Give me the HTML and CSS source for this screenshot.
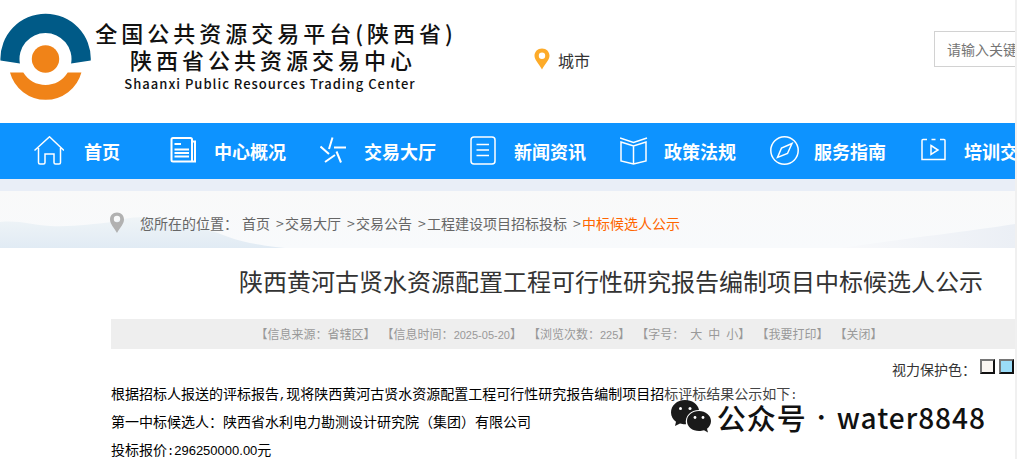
FILE: index.html
```html
<!DOCTYPE html>
<html lang="zh-CN">
<head>
<meta charset="utf-8">
<title>陕西省公共资源交易中心</title>
<link rel="stylesheet" href="styles.css">
</head>
<body>
<div class="page">
  <header class="header">
    <svg class="logo" width="92" height="88" viewBox="0 0 92 88" aria-hidden="true">
      <path fill="#005a87" d="M0.430 47.500A45.200 45.200 0 1 1 90.770 47.500L71.100 50.500A26 26 0 1 0 19.900 50.500Z"/>
      <path fill="#f08318" d="M10 59.500H23.300A26 26 0 0 0 67.700 59.500H81.400A37 37 0 0 1 10 59.500Z"/>
      <circle cx="45.500" cy="46" r="13.700" fill="#f08318"/>
    </svg>
    <div class="brand">
      <div class="brand-cn">全国公共资源交易平台(陕西省)</div>
      <div class="brand-cn brand-second">陕西省公共资源交易中心</div>
      <div class="brand-en">Shaanxi Public Resources Trading Center</div>
    </div>
    <a class="city" href="#">
      <svg width="16" height="22" viewBox="0 0 16 22" aria-hidden="true"><path fill="#fdab29" fill-rule="evenodd" d="M8 0.500C3.600 0.500 0.500 3.700 0.500 7.700C0.500 12 4.500 15 8 21.500C11.500 15 15.500 12 15.500 7.700C15.500 3.700 12.400 0.500 8 0.500ZM8 4.500A3.200 3.200 0 1 1 8 10.900A3.200 3.200 0 1 1 8 4.500Z"/></svg>
      <span>城市</span>
    </a>
    <form class="search"><input type="text" aria-label="搜索" placeholder="请输入关键字"></form>
  </header>

  <nav class="nav">
    <a class="nav-item nav-home" href="#">
      <svg class="nav-icon" viewBox="0 0 30 30"><path d="M0.500 14.500L15.500 0.800L30 14.500M4.500 12V26.500Q4.500 28 6 28H9.500Q11 28 11 26.500V18H20V26.500Q20 28 21.500 28H25Q26.500 28 26.500 26.500V12"/></svg>
      <span>首页</span>
    </a>
    <a class="nav-item" href="#">
      <svg class="nav-icon nav-icon-bold" viewBox="0 0 30 30"><path d="M3 2H20.500Q22 2 22 3.500V25.500H3Q1.500 25.500 1.500 24V3.500Q1.500 2 3 2ZM22 5.500H25V25.500H20.500M4.500 8H11M4.500 13.500H19M4.500 17H19M4.500 20.500H19"/></svg>
      <span>中心概况</span>
    </a>
    <a class="nav-item" href="#">
      <svg class="nav-icon nav-icon-bold" viewBox="0 0 30 30"><path d="M12.500 1.500L9 13M14 11.500H26M16.500 15.500L21 26.500M15 19L5 26M9 18L0.500 10.500"/></svg>
      <span>交易大厅</span>
    </a>
    <a class="nav-item" href="#">
      <svg class="nav-icon" viewBox="0 0 30 30"><rect x="1" y="1" width="24" height="27" rx="3"/><path d="M6.500 8.500H19M6.500 14H19M6.500 19.500H19"/></svg>
      <span>新闻资讯</span>
    </a>
    <a class="nav-item" href="#">
      <svg class="nav-icon" viewBox="0 0 30 30"><path d="M0 2L13.500 6.500L27 2M1 6L13.500 10L26 6V25L13.500 28L1 25ZM13.500 10V28"/></svg>
      <span>政策法规</span>
    </a>
    <a class="nav-item" href="#">
      <svg class="nav-icon" viewBox="0 0 30 30"><circle cx="14.500" cy="14.500" r="13.700"/><path d="M22 7.500L11.500 12L7.500 21.500L17.500 17.500Z"/></svg>
      <span>服务指南</span>
    </a>
    <a class="nav-item" href="#">
      <svg class="nav-icon" viewBox="0 0 30 30"><path d="M7 3.500H3Q2 3.500 2 4.500V23.500H25V4.500Q25 3.500 24 3.500H20M11.500 3.500H15.500M11 9.500L18 14L11 18.500Z"/></svg>
      <span>培训交易</span>
    </a>
  </nav>

  <div class="crumb-bar">
    <svg class="hills" viewBox="0 0 1015 57" preserveAspectRatio="none" aria-hidden="true">
      <defs>
        <linearGradient id="hill" x1="0" y1="0" x2="0" y2="1"><stop offset="0" stop-color="#eff4f7"/><stop offset="1" stop-color="#e1ebf4"/></linearGradient>
        <linearGradient id="slope" x1="0" y1="0" x2="1" y2="0"><stop offset="0" stop-color="#f8f9fb"/><stop offset="1" stop-color="#ebeff5"/></linearGradient>
      </defs>
      <path fill="url(#hill)" d="M0 31C20 29 32 34 50 35C75 36 92 33 112 31C130 25 145 25 165 29C187 34 202 37 218 42C235 49 248 53 285 57H0Z"/>
      <path fill="url(#slope)" d="M840 57C910 47 970 40 1015 33V57Z"/>
    </svg>
    <div class="crumbs">
      <svg class="crumb-pin" width="16" height="22" viewBox="0 0 16 22" aria-hidden="true"><path fill="#b1b1b1" fill-rule="evenodd" d="M8 0.500C3.800 0.500 1 3.500 1 7.500C1 12 5 15.500 8 21C11 15.500 15 12 15 7.500C15 3.500 12.200 0.500 8 0.500ZM8 3.800A3.200 3.200 0 1 1 8 10.200A3.200 3.200 0 1 1 8 3.800Z"/></svg>
      <span class="crumb-label">您所在的位置：</span>
      <a href="#">首页</a><span class="sep">&gt;</span><a href="#">交易大厅</a><span class="sep">&gt;</span><a href="#">交易公告</a><span class="sep">&gt;</span><a href="#">工程建设项目招标投标</a><span class="sep">&gt;</span><a class="current" href="#">中标候选人公示</a>
    </div>
  </div>

  <main class="article">
    <h1 class="title">陕西黄河古贤水资源配置工程可行性研究报告编制项目中标候选人公示</h1>
    <div class="meta">
      <span>【信息来源：省辖区】</span>
      <span>【信息时间：<span class="num">2025-05-20</span>】</span>
      <span>【浏览次数：<span class="num">225</span>】</span>
      <span class="sizes"><span>【字号：</span><a href="#">大</a><a href="#">中</a><a href="#">小】</a></span>
      <a href="#">【我要打印】</a>
      <a href="#">【关闭】</a>
    </div>
    <div class="eye-care">
      <span class="eye-label">视力保护色：</span>
      <button class="swatch swatch-cream" type="button" aria-label="米白"></button>
      <button class="swatch swatch-blue" type="button" aria-label="浅蓝"></button>
    </div>
    <div class="content">
      <p>根据招标人报送的评标报告<span class="punct">,</span>现将陕西黄河古贤水资源配置工程可行性研究报告编制项目招<span class="soft">标评标结果公示如下<span class="punct">:</span></span></p>
      <p>第一中标候选人：陕西省水利电力勘测设计研究院（集团）有限公司</p>
      <p>投标报价<span class="punct">:</span><span class="num">296250000.00</span>元</p>
    </div>
    <div class="watermark">
      <svg width="42" height="36" viewBox="0 0 42 36" aria-hidden="true">
        <path fill="#1a1a1a" d="M15 1C7 1 1 6.500 1 13.500C1 17.500 3 20.500 6 22.800L5 27L10 24.500C12 25 13.500 25.300 16 25.200C14.500 17 21 11 29 11C28 5 22 1 15 1Z"/>
        <path fill="#1a1a1a" d="M29 12C22 12 17 16.500 17 22C17 28 22.500 32 29 32C31 32 32.500 31.700 34 31.200L38 33.500L37 29.800C39.500 28 41 25 41 22C41 16.500 35.500 12 29 12Z"/>
        <g fill="#fff"><circle cx="10.500" cy="9.500" r="1.500"/><circle cx="20" cy="9.500" r="1.500"/><circle cx="25" cy="18.500" r="1.400"/><circle cx="33" cy="18.500" r="1.400"/></g>
      </svg>
      <span class="wm-label">公众号</span><span class="wm-dot">·</span><span>water8848</span>
    </div>
  </main>
</div>
</body>
</html>
```
FILE: styles.css
```css
* { box-sizing: border-box; }

body {
  margin: 0;
  background: #f0f0f0;
  font-family: "Noto Sans CJK SC", sans-serif;
  font-size: 14px;
  color: #333;
}

a { color: inherit; text-decoration: none; }
svg { display: block; flex: none; }

.page {
  min-height: 100vh;
  margin-right: 2px;
  background: #fff;
  overflow: hidden;
}

.header {
  display: flex;
  align-items: flex-start;
  height: 123px;
}
.logo { margin-top: 13px; }
.brand {
  width: 362px;
  padding-top: 19px;
  margin-left: 3px;
  text-align: center;
  white-space: nowrap;
  color: #111;
  font-weight: 500;
}
.brand-cn { font-size: 22px; line-height: 27px; letter-spacing: 4px; }
.brand-second { padding-right: 6px; }
.brand-en { font-size: 13px; line-height: 22px; letter-spacing: 1px; padding-right: 12px; }
.city {
  display: flex;
  gap: 8px;
  margin: 48px 0 0 77px;
  font-size: 16px;
  line-height: 24px;
}
.search { width: 81px; margin: 31px 0 0 auto; overflow: hidden; }
.search input {
  display: block;
  width: 240px;
  height: 36px;
  padding: 0 12px;
  border: 1px solid #d2d2d2;
  background: #fff;
  font: inherit;
}
.search input::placeholder { color: #757575; }

.nav {
  display: flex;
  height: 56px;
  background: #0d93ff;
  color: #fff;
}
.nav-item {
  display: flex;
  flex: none;
  align-items: center;
  gap: 14px;
  padding: 0 17px;
  font-size: 18px;
  font-weight: 700;
}
.nav-home { gap: 20px; padding: 0 33px 0 34px; }
.nav-icon {
  width: 30px;
  height: 30px;
  fill: none;
  stroke: #fff;
  stroke-width: 1.5;
}
.nav-icon-bold { stroke-width: 2; }

.crumb-bar {
  position: relative;
  border-top: 12px solid #e9eef7;
  background: linear-gradient(#f9f9f9, #f8fafc);
}
.hills { position: absolute; inset: 0; width: 100%; height: 100%; }
.crumbs {
  position: relative;
  display: flex;
  align-items: center;
  height: 57px;
  padding: 6px 0 0 109px;
  color: #666;
  white-space: nowrap;
}
.crumb-label { margin: 0 4px 0 15px; }
.sep { width: 15px; padding-left: 6px; }
.current { color: #f60; }

.article { position: relative; padding-left: 111px; }
.title {
  margin: 0;
  padding: 15px 0 20px 96px;
  font-size: 24px;
  font-weight: 400;
  line-height: 36px;
  text-align: center;
  white-space: nowrap;
}
.meta {
  display: flex;
  justify-content: center;
  gap: 6px;
  padding-left: 12px;
  background: #eee;
  color: #999;
  font-size: 12px;
  line-height: 30px;
  white-space: nowrap;
}
.sizes { display: flex; gap: 6px; }
.num {
  font-family: "Liberation Sans", sans-serif;
  line-height: 1;
}
.punct {
  font-family: "Liberation Mono", monospace;
  font-size: 12px;
  line-height: 1;
}
.meta .num { font-size: 11px; }
.content .num { font-size: 13px; }

.eye-care {
  display: flex;
  justify-content: flex-end;
  gap: 4px;
  padding: 10px 1px 0 0;
  line-height: 20px;
}
.swatch {
  width: 15px;
  height: 15px;
  padding: 0;
  border: 2px solid;
  border-color: #767676 #111 #111 #767676;
}
.swatch-cream { background: #faf6f2; }
.swatch-blue { background: #9bdcf8; }

.content { color: #000; line-height: 28px; }
.content p { margin: 0; }
.soft { color: #444; }

.watermark {
  position: absolute;
  right: 29px;
  top: 151px;
  display: flex;
  align-items: center;
  color: #111;
  font-size: 28px;
  font-weight: 500;
  line-height: 30px;
  letter-spacing: 1px;
}
.wm-label { margin-left: 5px; font-size: 29px; }
.wm-dot { width: 30px; font-size: 20px; text-align: center; }
```
